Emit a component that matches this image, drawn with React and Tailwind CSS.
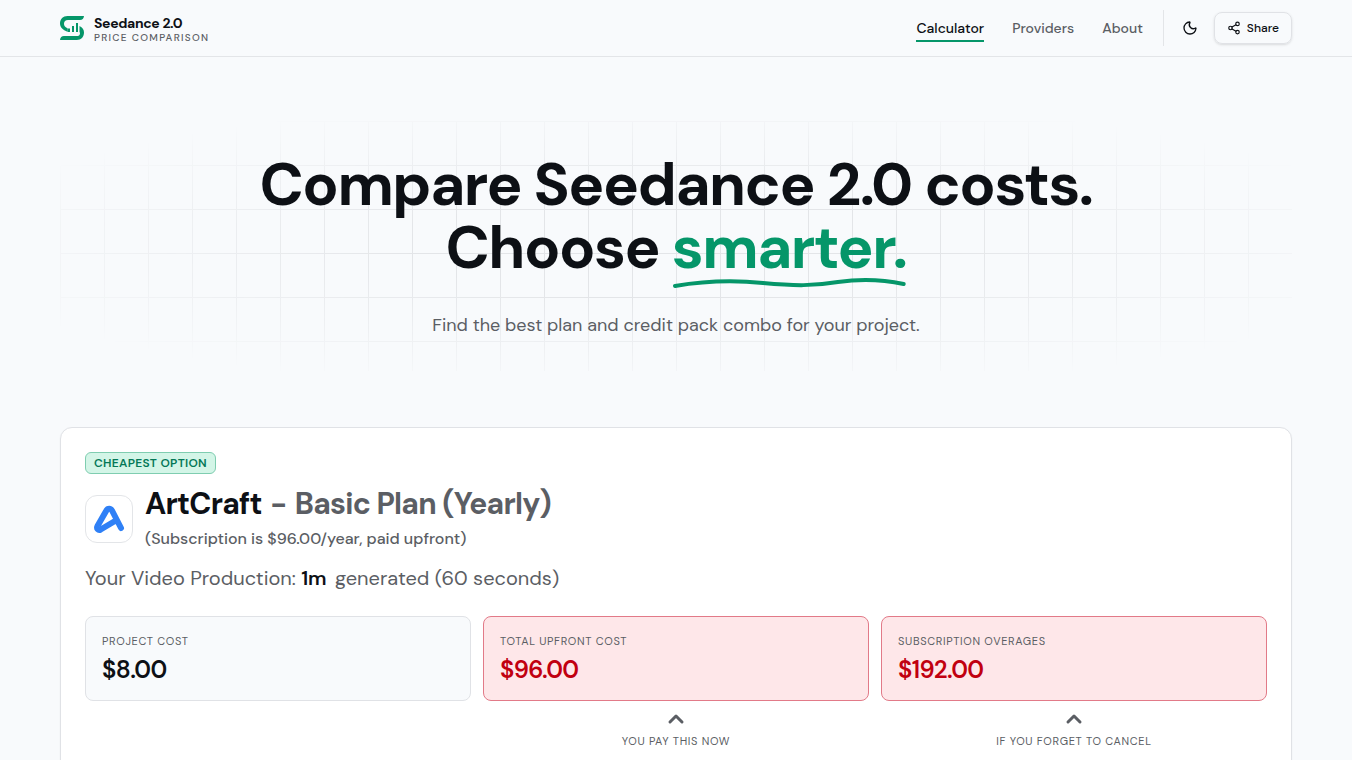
import React from 'react';
import { ChevronUp, Moon, Share2 } from 'lucide-react';

const navLinks = [
  { label: 'Calculator', href: '#calculator', active: true },
  { label: 'Providers', href: '#providers' },
  { label: 'About', href: '#about' },
];

const stats = [
  { label: 'Project cost', value: '$8.00' },
  { label: 'Total upfront cost', value: '$96.00', alert: true, note: 'You pay this now' },
  { label: 'Subscription overages', value: '$192.00', alert: true, note: 'If you forget to cancel' },
];

function Logo() {
  return (
    <svg className="size-6 shrink-0" viewBox="0 0 24 24" fill="none" aria-hidden="true">
      <path
        d="M24 0c-.3 2.600-1.600 4-4 4H8C5.400 4 4 5.500 4 7.700c0 1.500.6 2.700 1.800 3.600l2 1.200V16C2.500 14 0 11.300 0 7.600 0 3 3 0 7.500 0H24z"
        fill="#059669"
      />
      <path
        d="M0 24c.3-2.600 1.600-4 4-4h12.500c2.300 0 3.500-1 3.500-2.600 0-.6-.2-1-.5-1.400V10C22.500 11.500 24 13.500 24 16.500c0 4.500-2.800 7.500-7.200 7.500H0z"
        fill="#059669"
      />
      <path d="M9 12.500V16M13 10v6M17 7v9" stroke="#059669" strokeWidth="2" />
    </svg>
  );
}

function Header() {
  return (
    <header className="border-b border-[#e3e5e8]">
      <div className="mx-auto flex h-14 max-w-7xl items-center justify-between px-6">
        <a href="#home" className="flex items-center gap-2.5">
          <Logo />
          <div className="flex flex-col gap-px pt-[3px]">
            <span className="text-[14px] leading-4 font-bold tracking-tight">Seedance 2.0</span>
            <span className="text-[10px] leading-3 font-medium tracking-[0.13em] text-[#5b5e64] uppercase">
              Price comparison
            </span>
          </div>
        </a>
        <div className="flex items-center">
          <nav className="flex items-center gap-7 text-[14px] leading-5 font-medium">
            {navLinks.map((link) => (
              <a
                key={link.label}
                href={link.href}
                className={
                  link.active
                    ? 'border-y-2 border-t-transparent border-b-[#059669] py-0.5 text-[#0d1015]'
                    : 'py-1 text-[#5b5e64]'
                }
              >
                {link.label}
              </a>
            ))}
          </nav>
          <div className="ml-5 h-9 w-px bg-[#e3e5e8]" />
          <button type="button" aria-label="Toggle theme" className="mr-2 ml-2.5 flex size-8 items-center justify-center">
            <Moon size={16} />
          </button>
          <button
            type="button"
            className="flex h-8 items-center gap-1.5 rounded-lg border border-[#e0e2e6] px-3 text-[12px] font-medium shadow-sm"
          >
            <Share2 size={14} />
            Share
          </button>
        </div>
      </div>
    </header>
  );
}

function Hero() {
  return (
    <section className="relative py-8 text-center">
      <div className="absolute inset-0 bg-[linear-gradient(to_right,#e3e5e8_1px,transparent_1px),linear-gradient(to_bottom,#e3e5e8_1px,transparent_1px)] mask-[radial-gradient(ellipse_at_center,black_30%,transparent_85%)] bg-size-[44px_44px]" />
      <div className="relative">
        <h1 className="text-[60px] leading-[63px] font-bold tracking-tight">
          Compare Seedance 2.0 costs.
          <br />
          Choose{' '}
          <span className="relative inline-block text-[#059669]">
            smarter.
            <svg
              className="absolute top-full left-0 h-3 w-full overflow-visible"
              viewBox="0 0 232 12"
              preserveAspectRatio="none"
              fill="none"
              aria-hidden="true"
            >
              <path
                d="M3 7C32 2 60 1 90 4c32 3 50 3 74-1 22-3 46-2 65 2"
                stroke="currentColor"
                strokeWidth="4"
                strokeLinecap="round"
              />
            </svg>
          </span>
        </h1>
        <p className="mt-8 text-[18px] leading-7 text-[#5b5e64]">
          Find the best plan and credit pack combo for your project.
        </p>
      </div>
    </section>
  );
}

function StatCard({ label, value, alert, note }) {
  return (
    <div>
      <div
        className={
          alert
            ? 'rounded-lg border border-[#e27a88] bg-[#fee7e9] p-4'
            : 'rounded-lg border border-[#e0e2e6] bg-[#f8fafc] p-4'
        }
      >
        <div className="text-[11px] leading-4 tracking-[0.06em] text-[#5b5e64] uppercase">{label}</div>
        <div
          className={
            alert
              ? 'mt-1.5 text-[24px] leading-[29px] font-semibold tracking-tight text-[#c10010]'
              : 'mt-1.5 text-[24px] leading-[29px] font-semibold tracking-tight'
          }
        >
          {value}
        </div>
      </div>
      {note && (
        <div className="flex flex-col items-center gap-0.5 pt-1.5 text-[#5b5e64]">
          <ChevronUp size={24} strokeWidth={3} />
          <span className="text-[11px] leading-4 tracking-[0.06em] uppercase">{note}</span>
        </div>
      )}
    </div>
  );
}

function ResultCard() {
  return (
    <section className="mt-14 rounded-xl border border-[#e0e2e6] bg-white p-6 shadow-xs">
      <span className="flex h-[22px] w-fit items-center rounded-md border border-[#7fcdb0] bg-[#d3f5e7] px-2 text-[12px] font-semibold tracking-wide text-[#047857] uppercase">
        Cheapest option
      </span>
      <div className="mt-[13px] flex items-center gap-3">
        <div className="flex size-12 shrink-0 items-center justify-center rounded-xl border border-[#e3e5e8]">
          <svg className="size-8" viewBox="0 0 32 32" fill="none" aria-hidden="true">
            <path
              d="M28 25 19 7.500c-1.300-2.500-4.300-2.500-5.600 0L4.500 23c-1.300 2.700.8 4.800 3.200 3.500L22 18"
              stroke="#2f80f6"
              strokeWidth="6"
              strokeLinecap="round"
              strokeLinejoin="round"
            />
          </svg>
        </div>
        <div>
          <h2 className="text-[30px] leading-[34px] font-bold tracking-tight">
            ArtCraft{' '}
            <span className="text-[#5b5e64]">
              <span className="mx-0.5">-</span> Basic Plan (Yearly)
            </span>
          </h2>
          <p className="mt-1.5 text-[16px] leading-6 font-medium text-[#5b5e64]">
            (Subscription is $96.00/year, paid upfront)
          </p>
        </div>
      </div>
      <p className="mt-[13px] text-[20px] leading-7 text-[#5b5e64]">
        Your Video Production: <span className="mr-[3px] font-semibold text-[#0d1015]">1m</span> generated (60 seconds)
      </p>
      <div className="mt-6 grid grid-cols-3 gap-3">
        {stats.map((stat) => (
          <StatCard key={stat.label} {...stat} />
        ))}
      </div>
    </section>
  );
}

function App() {
  return (
    <div className="min-h-screen bg-[#f8fafc] font-['DM_Sans',Inter,sans-serif] text-[#0d1015]">
      <Header />
      <main className="mx-auto max-w-7xl px-6 pt-16">
        <Hero />
        <ResultCard />
      </main>
    </div>
  );
}

export default App;
